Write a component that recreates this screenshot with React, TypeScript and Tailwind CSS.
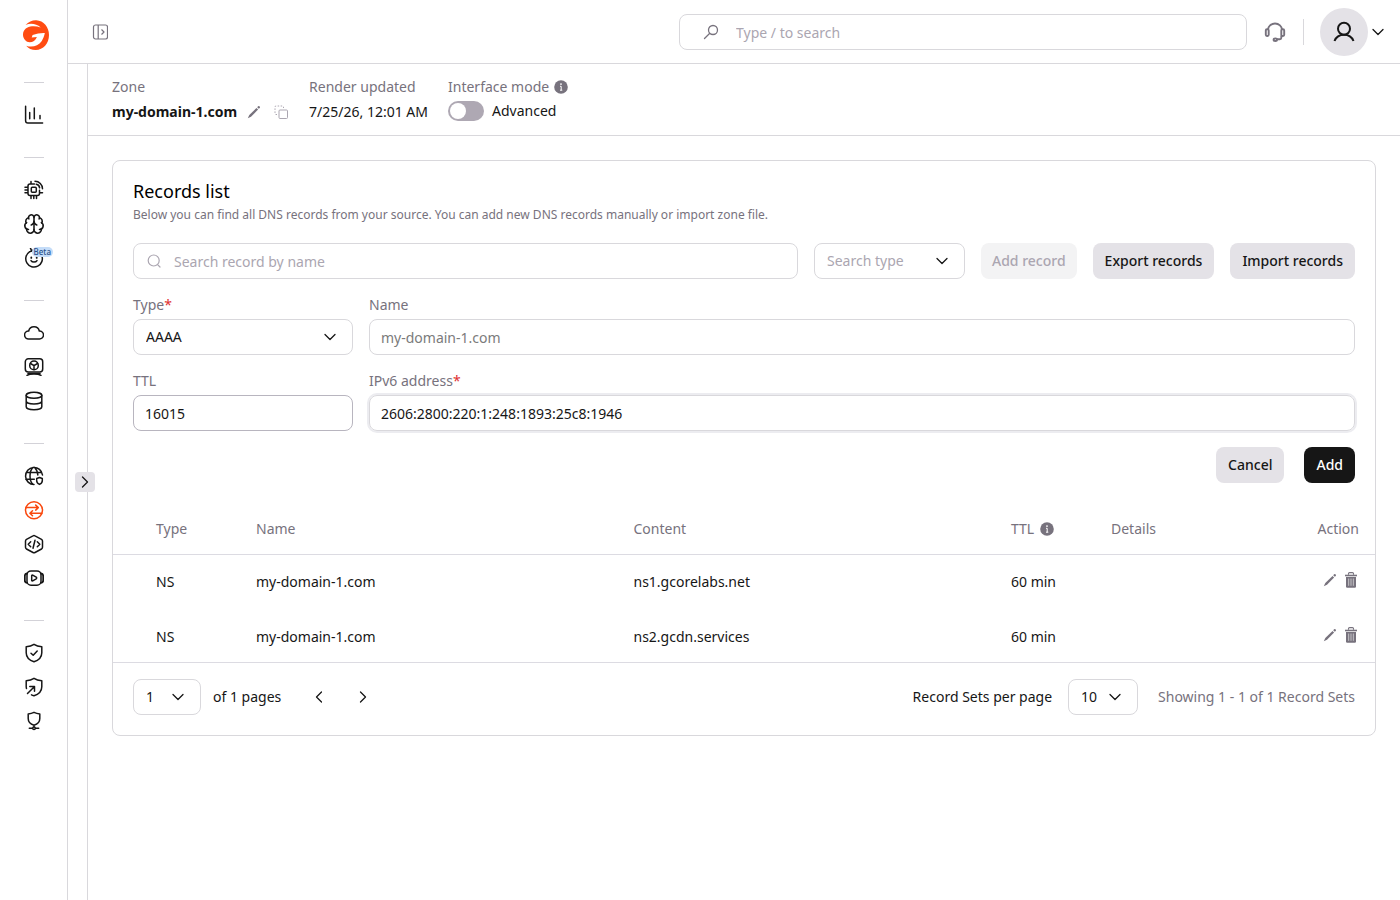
import { useState } from "react";
import type { InputHTMLAttributes, ReactNode, SelectHTMLAttributes } from "react";
import { Brain } from "lucide-react";
import clsx from "clsx";

type IconProps = { children: ReactNode };

const NavIcon = ({ children }: IconProps) => (
    <svg className="w-5 h-5" viewBox="0 0 20 20" fill="none" stroke="currentColor" strokeWidth="1.5" strokeLinecap="round" strokeLinejoin="round" aria-hidden="true">
        {children}
    </svg>
);

const Chevron = ({ className }: { className?: string }) => (
    <svg className={clsx("w-3 h-3", className)} viewBox="0 0 12 12" fill="none" stroke="currentColor" strokeWidth="1.3" strokeLinecap="round" strokeLinejoin="round" aria-hidden="true">
        <path d="M1 3.5l5 5 5-5" />
    </svg>
);

const PencilIcon = () => (
    <svg className="w-3.5 h-3.5" viewBox="0 0 14 14" fill="currentColor" aria-hidden="true">
        <path d="M9.5 2.9l1.6 1.6L4 11.700l-3.200 1.500L2.300 10z" />
        <path d="M10.200 2.200l.9-.9a.9.9 0 0 1 1.300 0l.3.300a.9.9 0 0 1 0 1.300l-.9.9z" />
    </svg>
);

const TrashIcon = () => (
    <svg className="w-3 h-4" viewBox="0 0 12 16" fill="none" aria-hidden="true">
        <path d="M3.5 2.8V1.6a1 1 0 0 1 1-1h3a1 1 0 0 1 1 1v1.2" stroke="currentColor" strokeWidth="1.1" />
        <path d="M0 2.700h12v1.600H0z" fill="currentColor" />
        <path d="M1 5h10v9.500a1.200 1.200 0 0 1-1.200 1.200H2.200A1.200 1.200 0 0 1 1 14.500z" fill="currentColor" />
        <path d="M3.700 6.500v7.300M6 6.500v7.300M8.300 6.500v7.300" stroke="#fff" strokeWidth=".6" />
    </svg>
);

const InfoIcon = () => (
    <svg className="w-3.5 h-3.5 text-[#77727d]" viewBox="0 0 14 14" aria-hidden="true">
        <circle cx="7" cy="7" r="6.800" fill="currentColor" />
        <path d="M6 6.300h1.200v3.900M6 10.200h2.300" fill="none" stroke="#fff" strokeWidth="1" />
        <circle cx="7" cy="4.100" r=".9" fill="#fff" />
    </svg>
);

const Logo = () => (
    <svg className="w-[26px] h-[30px]" viewBox="0 0 26 30" aria-hidden="true">
        <path fill="#ff4c12" d="M2.600 4.900C5.500 1.700 9.500 0 13.300.2 20.600.6 26 6.900 26 15c0 8.500-5.800 15-13.300 15-4 0-7.400-1.600-9.500-4.300 5.500 2.200 12 .4 15.600-4.700l1.800-3.700c.6-1.400 1-3 1.200-4.300-4-.2-8.200.6-12.200 2l-.9 2.600c1.600-.5 3.500-.7 5.200-.7-1.300 3.400-4 5.400-7.300 5.400C3 22.300-.2 18.700 0 14.300.3 9.400 4.200 6.500 9 6.200c3-.2 6 .2 8.700 1.200C13.700 3.900 7.800 2.700 2.600 4.900z" />
    </svg>
);

const navGroups = [
    [
        {
            label: "Reports",
            icon: <NavIcon><path d="M1.600 1.300v14.500a2.300 2.300 0 0 0 2.300 2.300h14.700M5.700 7.500v6.300M10.300 3v10.800M16 10.500v3.300" /></NavIcon>,
        },
    ],
    [
        {
            label: "Edge AI",
            icon: (
                <NavIcon>
                    <path d="M10.500 4H6a2 2 0 0 0-2 2v7.500a2 2 0 0 0 2 2h7.500a2 2 0 0 0 2-2v-3.300M1 7.300h3M1 10h3M1 12.700h3M7 15.500v3M9.800 15.500v3M12.500 15.500v3M7 4V1.500M15.500 12.700h3" />
                    <rect x="7.300" y="7.300" width="5" height="5" rx="1" />
                    <path d="M11 1.300a7.500 7.500 0 0 1 7.500 7.500M12.300 4.300a4 4 0 0 1 3.300 3.500" />
                </NavIcon>
            ),
        },
        { label: "AI models", icon: <Brain className="w-[22px] h-[22px]" strokeWidth={1.700} /> },
        {
            label: "AI assistant",
            beta: true,
            icon: (
                <NavIcon>
                    <path d="M5.500 3.800A8.300 8.300 0 1 0 17.700 7.500M5.500 3.800c2-.3 2.300-1.800 1-3.300M7.500 3.200l1.500-1" />
                    <path d="M7 12.600c1.300 2 4.700 2 6 0" />
                    <path d="M7.300 9.500v.4M12.700 9.500v.4" strokeWidth="1.800" />
                </NavIcon>
            ),
        },
    ],
    [
        {
            label: "Cloud",
            icon: <NavIcon><path d="M5 16h10.200a4 4 0 0 0 .6-8h-.5a5.400 5.400 0 0 0-10.600 0h-.5A4 4 0 0 0 5 16z" /></NavIcon>,
        },
        {
            label: "Hosting",
            icon: (
                <NavIcon>
                    <rect x="1.300" y="1.800" width="17.400" height="13.200" rx="3" />
                    <circle cx="10" cy="8.400" r="4.300" />
                    <path d="M6.500 6.500L10 8.600l3.500-2.100M10 8.600v4M3 18.300c3-1.600 11-1.600 14 0M4 16.500h12" />
                </NavIcon>
            ),
        },
        {
            label: "Storage",
            icon: (
                <NavIcon>
                    <ellipse cx="10" cy="4.300" rx="7.800" ry="3" />
                    <path d="M2.200 4.300v11.400c0 1.700 3.500 3 7.800 3s7.800-1.300 7.800-3V4.300M2.200 10c0 1.700 3.500 3 7.800 3s7.800-1.300 7.800-3" />
                </NavIcon>
            ),
        },
    ],
    [
        {
            label: "CDN",
            icon: (
                <NavIcon>
                    <path d="M18.500 9A8.500 8.500 0 1 0 10 18.500M2.500 6.500h15M1.800 13.300h8.500M9 1.500C5 5 5 15 9 18.300M10.500 1.500c2.200 2 3.200 4.500 3.300 7.500" />
                    <path d="M15.500 11.500l2.800 1v2.200c0 1.800-1.100 2.900-2.800 3.700-1.700-.8-2.800-1.900-2.800-3.700v-2.200z" />
                </NavIcon>
            ),
        },
        {
            label: "Managed DNS",
            active: true,
            icon: (
                <NavIcon>
                    <circle cx="10" cy="10.300" r="8.500" />
                    <path d="M2.200 7.600h12M11.700 5.100l2.600 2.500-2.600 2.500M17.800 13.200H6M8.500 10.700l-2.600 2.500 2.600 2.500" />
                </NavIcon>
            ),
        },
        {
            label: "FastEdge",
            icon: (
                <NavIcon>
                    <path d="M9 1.900a2 2 0 0 1 2 0l6.500 3.500a2 2 0 0 1 1 1.700v6.200a2 2 0 0 1-1 1.700L11 18.500a2 2 0 0 1-2 0L2.500 15a2 2 0 0 1-1-1.700V7.100a2 2 0 0 1 1-1.700z" />
                    <path d="M6.700 7.800l-2.500 2.500 2.500 2.500M13.300 7.800l2.500 2.500-2.500 2.500M11 6.300l-2 8" />
                </NavIcon>
            ),
        },
        {
            label: "Streaming",
            icon: (
                <NavIcon>
                    <rect x="3" y="2.900" width="14" height="14.300" rx="4" />
                    <path d="M3 5.500c-1.600.3-2.200 1-2.200 2.300v4.800c0 1.300.6 2 2.200 2.300M17 5.500c1.600.3 2.200 1 2.200 2.300v4.800c0 1.300-.6 2-2.200 2.300" strokeWidth="1.800" />
                    <path d="M7.700 7.800c0-.6.500-.8 1-.6l3.500 2c.6.400.6 1.200 0 1.600l-3.500 2c-.5.200-1 0-1-.6z" />
                </NavIcon>
            ),
        },
    ],
    [
        {
            label: "WAAP",
            icon: <NavIcon><path d="M10 1.300c2.300 1.500 4.800 2.200 7.800 2.500v6c0 4.500-3.200 7.500-7.800 9-4.600-1.500-7.800-4.500-7.800-9v-6c3-.3 5.500-1 7.800-2.500zM7 10.200l2.200 2.100L13.200 8" /></NavIcon>,
        },
        {
            label: "DDoS protection",
            icon: <NavIcon><path d="M2.500 11.500a9 9 0 0 1-.3-2V3.800c3-.3 5.500-1 7.800-2.500 2.300 1.500 4.800 2.200 7.800 2.500v6c0 4.500-3.200 7.500-7.800 9-.9-.3-1.700-.6-2.500-1M3.500 16.500l6.800-6.800M5.800 9.500h4.700v4.700" /></NavIcon>,
        },
        {
            label: "Network security",
            icon: (
                <NavIcon>
                    <path d="M10 1.300c1.800.9 3.600 1.400 5.800 1.600v4.600c0 3.300-2.400 5.700-5.800 6.800-3.400-1.100-5.800-3.500-5.800-6.800V2.900c2.200-.2 4-.7 5.800-1.600zM10 14.300v1.500M5.300 17.300h3M11.700 17.300h3" />
                    <circle cx="10" cy="17.300" r="1.300" />
                </NavIcon>
            ),
        },
    ],
];

const Sidebar = () => (
    <aside className="w-17 shrink-0 border-r border-[#d9d8dc]">
        <a href="#" aria-label="Home" className="flex justify-center h-[82px] pt-5 pl-1">
            <Logo />
        </a>
        <nav className="flex flex-col items-center gap-[25px]">
            {navGroups.map((group, i) => (
                <div key={i} className="flex flex-col items-center">
                    <div className="w-5 h-px bg-[#d3d2d8] mb-[15px]" />
                    {group.map((item) => (
                        <a
                            key={item.label}
                            href="#"
                            aria-label={item.label}
                            className={clsx("relative flex items-center justify-center w-8 h-[34px]", "active" in item ? "text-[#f9480e]" : "text-[#161616]")}
                        >
                            {item.icon}
                            {"beta" in item && (
                                <span className="absolute left-3.5 top-1.5 px-0.5 rounded-full bg-[#c4dcf8] text-[8px] leading-[10px] font-medium text-[#27508a]">Beta</span>
                            )}
                        </a>
                    ))}
                </div>
            ))}
        </nav>
    </aside>
);

const TopBar = () => (
    <header className="flex items-center h-16 shrink-0 border-b border-[#d9d8dc] pl-6 pr-4">
        <button type="button" aria-label="Toggle menu" className="text-[#77727d]">
            <svg className="w-4 h-4" viewBox="0 0 16 16" fill="none" stroke="currentColor" strokeWidth="1.200" strokeLinejoin="round">
                <rect x="1.500" y="1" width="14" height="14" rx="2" />
                <path d="M6.200 1v14M9.500 5.500L12 8l-2.500 2.500" />
            </svg>
        </button>

        <div className="flex items-center ml-auto w-[568px] h-9 px-[23px] gap-[17px] border border-[#d9d8dc] rounded-lg">
            <svg className="w-4 h-4 shrink-0 text-[#77727d]" viewBox="0 0 16 16" fill="none" stroke="currentColor" strokeWidth="1.300" strokeLinecap="round" aria-hidden="true">
                <circle cx="10" cy="6" r="4.500" />
                <path d="M6.800 9.200L1.500 14.500" />
            </svg>
            <input type="text" aria-label="Search" placeholder="Type / to search" className="flex-1 pt-0.5 outline-none placeholder:text-[#aba6b1]" />
        </div>

        <button type="button" aria-label="Support" className="ml-4 text-[#77727d]">
            <svg className="w-6 h-6" viewBox="0 0 24 24" fill="none" stroke="currentColor" strokeWidth="1.900" aria-hidden="true">
                <path d="M5 9.800a7 6.300 0 0 1 14 0" />
                <rect x="2.800" y="9.300" width="2.900" height="6.700" rx="1.200" />
                <rect x="18.300" y="9.300" width="2.900" height="6.700" rx="1.200" />
                <path d="M18.300 15.500v2.300a1.500 1.500 0 0 1-1.500 1.500H14" />
                <ellipse cx="12.300" cy="19.700" rx="1.700" ry="1.300" />
            </svg>
        </button>
        <div className="ml-4 w-px h-[26px] bg-[#d9d8dc]" />
        <button type="button" aria-label="Account" className="flex items-center gap-1 ml-4 text-[#161616]">
            <span className="flex items-center justify-center w-12 h-12 rounded-full bg-[#e4e2e7]">
                <svg className="w-6 h-6" viewBox="0 0 24 24" fill="none" stroke="currentColor" strokeWidth="2" aria-hidden="true">
                    <circle cx="12" cy="8.800" r="6" />
                    <path d="M2.500 21c1.500-3.800 5-6.200 9.500-6.200s8 2.400 9.500 6.200" />
                </svg>
            </span>
            <Chevron />
        </button>
    </header>
);

const ZoneBar = () => {
    const [advanced, setAdvanced] = useState(false);

    return (
        <section className="flex pt-3 pb-[9px] pl-6 border-b border-[#d9d8dc] leading-[22px]">
            <div>
                <div className="text-[#77727d]">Zone</div>
                <div className="flex items-center h-7">
                    <span className="font-bold">my-domain-1.com</span>
                    <button type="button" aria-label="Edit zone" className="ml-2.5 text-[#77727d]"><PencilIcon /></button>
                    <button type="button" aria-label="Copy zone name" className="ml-3 text-[#aba6b1]">
                        <svg className="w-4 h-4" viewBox="0 0 16 16" fill="none" stroke="currentColor" aria-hidden="true">
                            <rect x="6" y="6" width="8.500" height="8.500" rx="1" />
                            <path d="M4 10.500H3a1 1 0 0 1-1-1V3a1 1 0 0 1 1-1h6.500a1 1 0 0 1 1 1v1" strokeDasharray="1.500 1.500" />
                        </svg>
                    </button>
                </div>
            </div>
            <div className="ml-5">
                <div className="text-[#77727d]">Render updated</div>
                <div className="flex items-center h-7">7/25/26, 12:01 AM</div>
            </div>
            <div className="ml-5">
                <div className="flex items-center gap-[5px] text-[#77727d]">Interface mode <InfoIcon /></div>
                <label className="flex items-center gap-2 h-[26px]">
                    <input
                        type="checkbox"
                        role="switch"
                        checked={advanced}
                        onChange={() => setAdvanced(!advanced)}
                        className="appearance-none w-9 h-5 p-0.5 rounded-full bg-[#aea8b3] checked:bg-[#161616] before:block before:w-4 before:h-4 before:rounded-full before:bg-white checked:before:ml-4"
                    />
                    Advanced
                </label>
            </div>
        </section>
    );
};

const TextInput = ({ className, ...props }: InputHTMLAttributes<HTMLInputElement>) => (
    <input type="text" className={clsx("w-full h-9 px-[11px] border rounded-lg outline-none", className)} {...props} />
);

type SelectProps = SelectHTMLAttributes<HTMLSelectElement> & { chevron?: string };

const Select = ({ className, chevron = "right-[17px]", children, ...props }: SelectProps) => (
    <div className={clsx("relative shrink-0", className)}>
        <select className="appearance-none w-full h-9 px-3 border border-[#d9d8dc] rounded-lg outline-none bg-white" {...props}>
            {children}
        </select>
        <Chevron className={clsx("absolute top-3 pointer-events-none text-[#161616]", chevron)} />
    </div>
);

const Label = ({ htmlFor, required, children }: { htmlFor: string; required?: boolean; children: ReactNode }) => (
    <label htmlFor={htmlFor} className="block mb-1 text-[#77727d]">
        {children}
        {required && <span className="text-[#e03131]">*</span>}
    </label>
);

const buttonBase = "shrink-0 h-9 rounded-lg font-medium";

const RecordForm = () => {
    const [type, setType] = useState("AAAA");
    const [ttl, setTtl] = useState("16015");
    const [address, setAddress] = useState("2606:2800:220:1:248:1893:25c8:1946");

    return (
        <form className="mt-4">
            <div className="grid grid-cols-[220px_1fr] gap-4">
                <div>
                    <Label htmlFor="type" required>Type</Label>
                    <Select id="type" value={type} onChange={(e) => setType(e.target.value)}>
                        <option>A</option>
                        <option>AAAA</option>
                        <option>CNAME</option>
                    </Select>
                </div>
                <div>
                    <Label htmlFor="name">Name</Label>
                    <TextInput id="name" placeholder="my-domain-1.com" className="border-[#d9d8dc] placeholder:text-[#7b7b7b]" />
                </div>
                <div>
                    <Label htmlFor="ttl">TTL</Label>
                    <TextInput id="ttl" value={ttl} onChange={(e) => setTtl(e.target.value)} className="border-[#b8b5bf]" />
                </div>
                <div>
                    <Label htmlFor="address" required>IPv6 address</Label>
                    <TextInput id="address" value={address} onChange={(e) => setAddress(e.target.value)} className="border-[#d9d8dc] ring-2 ring-[#ececf0]" />
                </div>
            </div>
            <div className="flex justify-end gap-5 mt-4">
                <button type="button" className={clsx(buttonBase, "px-3 bg-[#e4e2e7]")}>Cancel</button>
                <button type="button" className={clsx(buttonBase, "px-3 bg-[#161616] text-white")}>Add</button>
            </div>
        </form>
    );
};

const records = [
    { type: "NS", name: "my-domain-1.com", content: "ns1.gcorelabs.net", ttl: "60 min" },
    { type: "NS", name: "my-domain-1.com", content: "ns2.gcdn.services", ttl: "60 min" },
];

const RecordsTable = () => (
    <table className="w-full table-fixed mt-[21px] text-left leading-[22px]">
        <thead>
            <tr className="h-[50px] border-b border-[#dcdbe2] text-[#77727d]">
                <th className="w-[143px] pl-[43px] font-normal">Type</th>
                <th className="font-normal">Name</th>
                <th className="font-normal">Content</th>
                <th className="w-[100px] font-normal">
                    <span className="flex items-center gap-1.5">TTL <InfoIcon /></span>
                </th>
                <th className="w-[200px] font-normal">Details</th>
                <th className="w-16 pr-4 font-normal text-right">Action</th>
            </tr>
        </thead>
        <tbody className="border-b border-[#dcdbe2]">
            {records.map((record) => (
                <tr key={record.content} className="[&>td]:pt-4 [&>td]:pb-[17px] last:[&>td]:pb-3.5">
                    <td className="pl-[43px]">{record.type}</td>
                    <td>{record.name}</td>
                    <td>{record.content}</td>
                    <td>{record.ttl}</td>
                    <td />
                    <td className="pr-[18px]">
                        <div className="flex items-center justify-end gap-2 pb-1 text-[#77727d]">
                            <button type="button" aria-label="Edit record"><PencilIcon /></button>
                            <button type="button" aria-label="Delete record"><TrashIcon /></button>
                        </div>
                    </td>
                </tr>
            ))}
        </tbody>
    </table>
);

const Pagination = () => (
    <div className="flex items-center px-5 pt-4 pb-5">
        <Select aria-label="Page" className="w-17">
            <option>1</option>
        </Select>
        <span className="ml-3">of 1 pages</span>
        <button type="button" aria-label="Previous page" className="ml-8"><Chevron className="rotate-90" /></button>
        <button type="button" aria-label="Next page" className="ml-8"><Chevron className="-rotate-90" /></button>
        <label htmlFor="per-page" className="ml-auto mr-4">Record Sets per page</label>
        <Select id="per-page" className="w-[70px]">
            <option>10</option>
            <option>25</option>
        </Select>
        <span className="ml-5 text-[#77727d]">Showing 1 - 1 of 1 Record Sets</span>
    </div>
);

const RecordsCard = () => (
    <section className="m-6 border border-[#d9d8dc] rounded-lg">
        <div className="px-5 pt-[18px]">
            <h1 className="text-lg leading-6 font-normal text-black">Records list</h1>
            <p className="mt-0.5 text-xs leading-5 text-[#77727d]">
                Below you can find all DNS records from your source. You can add new DNS records manually or import zone file.
            </p>
            <div className="flex gap-4 mt-[18px]">
                <div className="flex flex-1 items-center h-9 px-3 gap-3 border border-[#d9d8dc] rounded-lg">
                    <svg className="w-4 h-4 shrink-0 text-[#aba6b1]" viewBox="0 0 16 16" fill="none" stroke="currentColor" strokeWidth="1.200" strokeLinecap="round" aria-hidden="true">
                        <circle cx="7.700" cy="7.500" r="5.500" />
                        <path d="M11.800 11.800l2.200 2.200" />
                    </svg>
                    <input type="text" aria-label="Search record by name" placeholder="Search record by name" className="flex-1 pt-0.5 outline-none placeholder:text-[#aba6b1]" />
                </div>
                <Select aria-label="Search type" className="w-[151px] text-[#aba6b1]">
                    <option>Search type</option>
                </Select>
                <button type="button" disabled className={clsx(buttonBase, "px-[11px] bg-[#f3f3f4] text-[#aba6b1]")}>Add record</button>
                <button type="button" className={clsx(buttonBase, "px-3 bg-[#e4e2e7]")}>Export records</button>
                <button type="button" className={clsx(buttonBase, "px-3 bg-[#e4e2e7]")}>Import records</button>
            </div>
            <RecordForm />
        </div>
        <RecordsTable />
        <Pagination />
    </section>
);

const App = () => (
    <div className="flex min-h-screen bg-white font-['Noto_Sans',sans-serif] text-sm text-[#161616]">
        <Sidebar />
        <div className="flex flex-col flex-1 min-w-0">
            <TopBar />
            <div className="flex flex-1">
                <div className="relative w-5 shrink-0 border-r border-[#d9d8dc]">
                    <button type="button" aria-label="Expand panel" className="absolute left-[7px] top-1/2 -translate-y-1/2 flex items-center justify-center w-5 h-5 rounded-sm bg-[#e4e2e7]">
                        <Chevron className="-rotate-90" />
                    </button>
                </div>
                <main className="flex-1 min-w-0">
                    <ZoneBar />
                    <RecordsCard />
                </main>
            </div>
        </div>
    </div>
);

export default App;
